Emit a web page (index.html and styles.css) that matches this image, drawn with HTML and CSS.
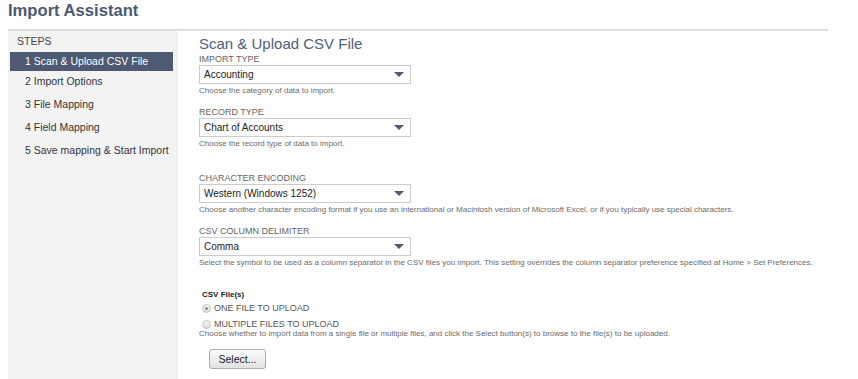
FILE: index.html
```html
<!DOCTYPE html>
<html lang="en">

<head>
  <meta charset="UTF-8">
  <title>Import Assistant</title>
  <link rel="stylesheet" href="styles.css">
</head>

<body>
  <div class="page">
    <h1 class="page-title">Import Assistant</h1>

    <div class="layout">
      <!-- steps sidebar -->
      <aside class="steps">
        <div class="steps-title">STEPS</div>
        <div class="step active">1 Scan &amp; Upload CSV File</div>
        <div class="step">2 Import Options</div>
        <div class="step">3 File Mapping</div>
        <div class="step">4 Field Mapping</div>
        <div class="step">5 Save mapping &amp; Start Import</div>
      </aside>

      <main class="content">
        <h2 class="section-title">Scan &amp; Upload CSV File</h2>

        <div class="field">
          <div class="field-label">IMPORT TYPE</div>
          <div class="dropdown">
            <span>Accounting</span>
            <svg class="caret" width="10" height="5" viewBox="0 0 10 5"><path d="M0 0h10L5 5z" /></svg>
          </div>
          <div class="help">Choose the category of data to import.</div>
        </div>

        <div class="field">
          <div class="field-label">RECORD TYPE</div>
          <div class="dropdown">
            <span>Chart of Accounts</span>
            <svg class="caret" width="10" height="5" viewBox="0 0 10 5"><path d="M0 0h10L5 5z" /></svg>
          </div>
          <div class="help">Choose the record type of data to import.</div>
        </div>

        <div class="spacer"></div>

        <div class="field">
          <div class="field-label">CHARACTER ENCODING</div>
          <div class="dropdown">
            <span>Western (Windows 1252)</span>
            <svg class="caret" width="10" height="5" viewBox="0 0 10 5"><path d="M0 0h10L5 5z" /></svg>
          </div>
          <div class="help">Choose another character encoding format if you use an international or Macintosh version of Microsoft Excel, or if you typically use special characters.</div>
        </div>

        <div class="field">
          <div class="field-label">CSV COLUMN DELIMITER</div>
          <div class="dropdown">
            <span>Comma</span>
            <svg class="caret" width="10" height="5" viewBox="0 0 10 5"><path d="M0 0h10L5 5z" /></svg>
          </div>
          <div class="help">Select the symbol to be used as a column separator in the CSV files you import. This setting overrides the column separator preference specified at Home &gt; Set Preferences.</div>
        </div>

        <div class="files">
          <div class="files-label">CSV File(s)</div>
          <div class="radio-row"><span class="radio checked"></span>ONE FILE TO UPLOAD</div>
          <div class="radio-row"><span class="radio"></span>MULTIPLE FILES TO UPLOAD</div>
          <div class="help files-help">Choose whether to import data from a single file or multiple files, and click the Select button(s) to browse to the file(s) to be uploaded.</div>
          <button class="select-btn">Select...</button>
        </div>
      </main>
    </div>
  </div>
</body>

</html>
```

FILE: styles.css
```css
html,
body {
  margin: 0;
  height: 100%;
}

body {
  font-family: "Liberation Sans", Arial, sans-serif;
  background: #ffffff;
  color: #333;
}

.page {
  margin: 0 30px 0 8px;
  height: 100%;
  display: flex;
  flex-direction: column;
}

.page-title {
  margin: 0;
  height: 29px;
  line-height: 22px;
  font-size: 16.6px;
  font-weight: 700;
  color: #4b5a70;
}

.layout {
  flex: 1;
  display: flex;
  border-top: 2px solid #dddddd;
}

/* sidebar */
.steps {
  width: 170px;
  background-color: #f3f3f3;
  padding-top: 3px;
}

.steps-title {
  font-size: 10.5px;
  line-height: 14px;
  color: #444;
  padding-left: 9px;
  margin-bottom: 4px;
}

.step {
  margin-left: 2px;
  width: 148px;
  height: 19px;
  line-height: 19px;
  padding-left: 15px;
  font-size: 10.5px;
  color: #333;
  margin-bottom: 4px;
  white-space: nowrap;
}

.step.active {
  background-color: #4d5a72;
  color: #ffffff;
  margin-bottom: 1px;
}

/* main column */
.content {
  flex: 1;
  padding-left: 21px;
  padding-top: 3px;
}

.section-title {
  margin: 0;
  font-size: 15px;
  line-height: 19px;
  font-weight: 400;
  color: #4f5f78;
}

.field {
  margin-bottom: 10px;
}

.field-label {
  font-size: 9px;
  line-height: 12px;
  color: #666;
}

.dropdown {
  height: 17px;
  border: 1px solid #cccccc;
  display: flex;
  align-items: center;
  justify-content: space-between;
  padding: 0 6px 0 4px;
  box-sizing: content-box;
  width: 200px;
  font-size: 10px;
  color: #222;
}

.caret {
  fill: #4d5a70;
}

.help {
  margin-top: 2px;
  font-size: 8px;
  line-height: 10px;
  color: #6b6b6b;
  white-space: nowrap;
}

.spacer {
  height: 13px;
}

.files {
  margin-top: 22px;
}

.files-label {
  padding-left: 3px;
  font-size: 8px;
  line-height: 10px;
  font-weight: 700;
  color: #222;
}

.radio-row {
  display: flex;
  align-items: center;
  height: 16px;
  padding-left: 3px;
  font-size: 9px;
  color: #555;
}

.radio {
  width: 7px;
  height: 7px;
  border-radius: 50%;
  border: 1px solid #c4c4c4;
  background: linear-gradient(#f4f4f4, #dedede);
  margin-right: 3px;
  position: relative;
}

.radio.checked::after {
  content: '';
  position: absolute;
  left: 2px;
  top: 2px;
  width: 3px;
  height: 3px;
  border-radius: 50%;
  background-color: #8a8a8a;
}

.files-help {
  margin-top: -3px;
}

.select-btn {
  display: block;
  margin: 10px 0 0 10px;
  width: 57px;
  height: 20px;
  padding: 0;
  border: 1px solid #adadad;
  border-radius: 3px;
  background: linear-gradient(#fafafa, #e2e2e2);
  font-family: "Liberation Sans", Arial, sans-serif;
  font-size: 10.5px;
  color: #222;
}
```
